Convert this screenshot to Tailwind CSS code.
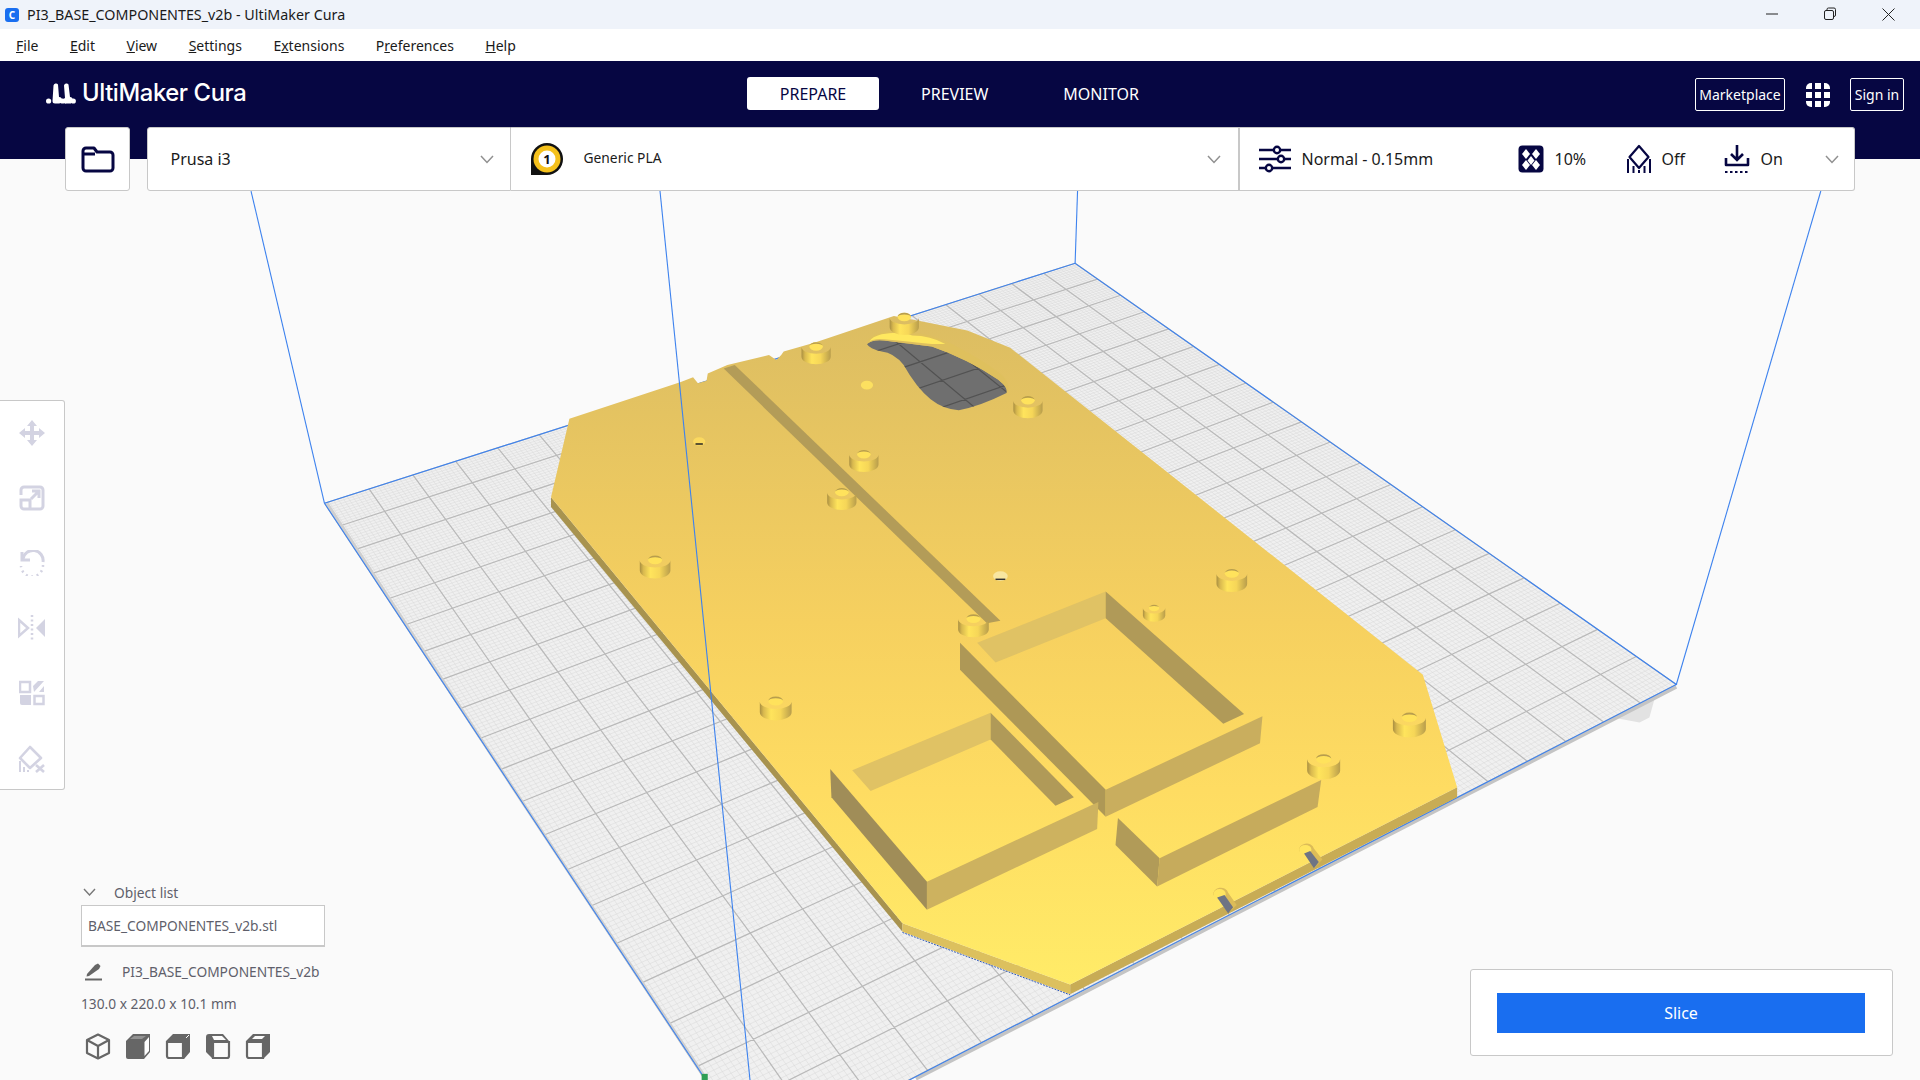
<!DOCTYPE html>
<html>
<head>
<meta charset="utf-8">
<script src="https://cdn.jsdelivr.net/npm/@tailwindcss/browser@4"></script>
</head>
<body class="m-0">
<div class="relative w-[1920px] h-[1080px] overflow-hidden bg-[#fafafa] flex flex-col font-['Noto_Sans',sans-serif]">

  <!-- 3D viewport -->
  <svg class="absolute left-0 top-0 w-[1920px] h-[1080px]" viewBox="0 0 1568 882">
    <defs>
      <linearGradient id="top" gradientUnits="userSpaceOnUse" x1="0" y1="260" x2="0" y2="810">
        <stop offset="0" stop-color="#dcbd62"/><stop offset="0.45" stop-color="#f6d05f"/><stop offset="0.7" stop-color="#fedc62"/><stop offset="1" stop-color="#ffec68"/>
      </linearGradient>
      <linearGradient id="cyl">
        <stop offset="0" stop-color="#a98f42"/><stop offset="0.12" stop-color="#d9b94f"/><stop offset="0.35" stop-color="#ffe45c"/><stop offset="0.65" stop-color="#f6d658"/><stop offset="1" stop-color="#b89d4c"/>
      </linearGradient>
      <symbol id="stud" viewBox="0 0 26 22" overflow="visible">
        <path d="M0.5 6.500A12.500 6 0 0 0 25.500 6.500V15A12.500 6.500 0 0 1 0.500 15Z" fill="url(#cyl)"/>
        <ellipse cx="13" cy="6.200" rx="5.800" ry="3.600" fill="#ffe25c"/>
        <path d="M7.200 6.200A5.800 3.600 0 0 1 18.800 6.200A5.800 2.200 0 0 0 7.200 6.200Z" fill="#b89d4e"/>
      </symbol>
      <clipPath id="holeclip"><path d="M708 281Q712 277 722 278Q745 281 761 283Q790 293 815 310Q824 317 822 321Q800 332 783 335Q770 334 760 326Q748 316 738 298Q730 288 720 287Q710 285 708 281Z"/></clipPath>
    </defs>

    <!-- shadow under plate -->
    <polygon points="1317,586 1339,590 1347,586 1352,568" fill="#e2e2e2"/>

    <!-- build plate -->
    <polygon points="878,215 1369,559 618,946 265,411" fill="#f0f0f0"/>
    <path id="minor" fill="none" stroke="#d8d8d8" stroke-width="0.4"/>
    <path id="major" fill="none" stroke="#b9b9b9" stroke-width="1"/>
    <polyline points="1369,561 1200,648 1000,751 873,817 748,881" fill="none" stroke="#c4c4c4" stroke-width="3"/>
    <polyline points="267,411 420,645 576,880" fill="none" stroke="#cfcfcf" stroke-width="2.500"/>

    <!-- build volume, behind -->
    <g fill="none" stroke="#3d82ee" stroke-width="0.9">
      <path d="M265 411L878 215L1369 559L700 904"/>
      <path d="M265 411L575 880"/>
      <path d="M205 156L265 411"/>
      <path d="M880 156L878 215"/>
      <path d="M1487 156L1369 559"/>
    </g>

    <!-- model -->
    <polygon points="450,406 737,754 737,761 450,414" fill="#a8934f"/>
    <polygon points="737,754 874,804 874,812 737,761" fill="#dcc05e"/>
    <polygon points="874,804 1190,643 1190,651 874,812" fill="#c8ac55"/>
    <polygon points="465,342 556,312 566,308 570,313 577,311 578,305 594,298 628,290 634,294 638,290 640,287 665,280 730,258 750,262 790,270 825,284 1162,551 1190,643 874,804 737,754 450,406" fill="url(#top)"/>
    <path d="M737 761.500L874 812.500" fill="none" stroke="#2a55b8" stroke-width="0.8" stroke-dasharray="1.500 1"/>

    <!-- hole -->
    <path d="M708 281Q712 277 722 278Q745 281 761 283Q790 293 815 310Q824 317 822 321Q800 332 783 335Q770 334 760 326Q748 316 738 298Q730 288 720 287Q710 285 708 281Z" fill="#6f6f6f"/>
    <path id="holegrid" clip-path="url(#holeclip)" fill="none" stroke="#525252" stroke-width="1"/>
    <path d="M708 281Q708 275 720 272Q735 268 745 272Q760 273 775 280Q805 295 820 308Q826 316 822 321Q824 317 815 310Q790 293 761 283Q745 281 722 278Q712 277 708 281Z" fill="#dfc05d"/>
    <path d="M710 279Q712 275 720 273Q735 270 745 274Q760 274 772 281L761 281Q745 279 722 277Q714 276 710 279Z" fill="#ffe85f"/>

    <!-- groove -->
    <polygon points="591,301 600,298 817,507 806,509" fill="#b39c58"/>

    <!-- small holes -->
    <g>
      <ellipse cx="708" cy="314.500" rx="5" ry="3.500" fill="#fce060"/>
      <ellipse cx="571" cy="360.500" rx="5" ry="3.500" fill="#fbd95f"/>
      <rect x="568" y="362" width="6" height="1.200" fill="#222"/>
      <ellipse cx="817" cy="470.500" rx="6" ry="4" fill="#f8e6a0"/>
      <rect x="813" y="472.500" width="8" height="1.200" fill="#333"/>
    </g>

    <!-- block A -->
    <polygon points="798,525 903,483 903,505 813,541" fill="#e0c264"/>
    <polygon points="903,483 903,505 999,591 1016,583" fill="#b09a58"/>
    <polygon points="784,525 784,547 903,667 903,645" fill="#ae9856"/>
    <polygon points="903,645 903,667 1029,607 1031,585" fill="#c9ae5e"/>

    <!-- block B -->
    <polygon points="696,629 809,582 809,604 711,646" fill="#e0c264"/>
    <polygon points="809,582 809,604 862,658 877,651" fill="#b09a58"/>
    <polygon points="678,628 679,651 757,743 757,720" fill="#a08d58"/>
    <polygon points="757,720 757,743 896,677 897,655" fill="#cdb25f"/>

    <!-- block C -->
    <polygon points="913,668 911,690 945,724 947,701" fill="#b19b58"/>
    <polygon points="947,701 945,724 1076,659 1079,637" fill="#c6ab5c"/>

    <!-- slots -->
    <path d="M991 731A6 5 0 0 1 1003 729L1010 739L1003 746L997 736Z" fill="#dcbc58"/>
    <ellipse cx="996" cy="730" rx="5" ry="4" fill="#ffe560"/>
    <polygon points="994,733 1000,731 1007,741 1003,746" fill="#6e7484"/>
    <path d="M1061 695A6 5 0 0 1 1073 693L1080 702L1073 709L1067 699Z" fill="#dcbc58"/>
    <ellipse cx="1066" cy="694" rx="5" ry="4" fill="#ffe560"/>
    <polygon points="1065,697 1070,695 1077,704 1073,709" fill="#6e7484"/>

    <!-- studs -->
    <use href="#stud" x="726" y="253" width="25" height="21"/>
    <use href="#stud" x="654" y="277" width="25" height="21"/>
    <use href="#stud" x="827" y="321" width="25" height="21"/>
    <use href="#stud" x="693" y="365" width="25" height="21"/>
    <use href="#stud" x="675" y="396" width="25" height="21"/>
    <use href="#stud" x="522" y="451" width="26" height="22"/>
    <use href="#stud" x="620" y="566" width="27" height="23"/>
    <use href="#stud" x="782" y="499" width="26" height="22"/>
    <use href="#stud" x="993" y="462" width="26" height="22"/>
    <use href="#stud" x="933" y="490" width="19" height="20"/>
    <use href="#stud" x="1137" y="579" width="28" height="24"/>
    <use href="#stud" x="1067" y="613" width="28" height="24"/>

    <!-- blue line over the model -->
    <path d="M539 156L612.500 882" fill="none" stroke="#3d82ee" stroke-width="0.9"/>
    <rect x="573" y="877" width="5" height="5" fill="#2f9e55"/>
  </svg>

  <!-- title bar -->
  <div class="relative h-[29px] bg-[#eff3fa] flex items-center pl-[5px] shrink-0">
    <div class="w-[14px] h-[14px] rounded-[3px] bg-[#196ef0] text-white text-[10px] leading-[14px] font-bold text-center">C</div>
    <span class="ml-[8px] text-[14.3px] text-[#1a1a1a]">PI3_BASE_COMPONENTES_v2b - UltiMaker Cura</span>
    <div class="ml-auto flex items-center">
      <svg class="w-[60px] h-[29px]" viewBox="0 0 60 29"><path d="M24 14H36" stroke="#222" stroke-width="1"/></svg>
      <svg class="w-[58px] h-[29px] -ml-[1px]" viewBox="0 0 58 29" fill="none" stroke="#222" stroke-width="1"><rect x="23.500" y="10.500" width="9" height="9" rx="1.500"/><path d="M26 10V9A1.500 1.500 0 0 1 27.500 8H33A1.500 1.500 0 0 1 34.500 9.500V15A1.500 1.500 0 0 1 33 16.500"/></svg>
      <svg class="w-[61px] h-[29px] -ml-[1px] mr-[1px]" viewBox="0 0 61 29"><path d="M24.500 8.500L36.500 20.500M36.500 8.500L24.500 20.500" stroke="#222" stroke-width="1"/></svg>
    </div>
  </div>

  <!-- menu bar -->
  <div class="relative h-[32px] bg-white flex items-center pl-[16px] gap-[31.5px] text-[14px] text-[#1a1a1a] shrink-0">
    <span><span class="underline">F</span>ile</span>
    <span><span class="underline">E</span>dit</span>
    <span><span class="underline">V</span>iew</span>
    <span><span class="underline">S</span>ettings</span>
    <span>E<span class="underline">x</span>tensions</span>
    <span>P<span class="underline">r</span>eferences</span>
    <span><span class="underline">H</span>elp</span>
  </div>

  <!-- header -->
  <div class="relative h-[98px] bg-[#060642] shrink-0">
    <div class="absolute left-[46px] top-[16px] flex items-center gap-[6px] h-[32px]">
      <svg class="w-[30px] h-[21px]" viewBox="0 0 30 21" fill="#fff">
        <circle cx="2.600" cy="18" r="2.600"/>
        <path d="M7.500 2.500A2.500 2.500 0 0 1 12 1.500L13 14A3 3 0 0 1 12.500 20.500H9A2.500 2.500 0 0 1 6.500 18Z"/>
        <circle cx="16.500" cy="18" r="2.600"/>
        <path d="M18 2.500A2.500 2.500 0 0 1 22.500 1.500L24 14A3 3 0 0 1 23 20.500H20.500A2.500 2.500 0 0 1 19 15Z"/>
        <circle cx="27.300" cy="18" r="2.600"/>
      </svg>
      <span class="font-['Inter',sans-serif] text-[23.8px] font-medium leading-none tracking-[-0.4px] text-white">UltiMaker Cura</span>
    </div>
    <div class="absolute left-[747px] top-[16px] flex items-center text-[16px]">
      <div class="w-[132px] h-[33px] rounded-[3px] bg-white text-[#060642] flex items-center justify-center">PREPARE</div>
      <div class="ml-[42px] text-white">PREVIEW</div>
      <div class="ml-[75px] text-white">MONITOR</div>
    </div>
    <div class="absolute left-[1695px] top-[17px] flex items-center">
      <div class="w-[90px] h-[33px] rounded-[2px] border border-white text-white text-[14px] flex items-center justify-center">Marketplace</div>
      <svg class="ml-[20px] w-[26px] h-[26px]" viewBox="0 0 26 26" fill="#fff">
        <path d="M1 6A5 5 0 0 1 6 1H7V7H1Z"/><rect x="10" y="1" width="6" height="6"/><path d="M19 1H20A5 5 0 0 1 25 6V7H19Z"/>
        <rect x="1" y="10" width="6" height="6"/><rect x="10" y="10" width="6" height="6"/><rect x="19" y="10" width="6" height="6"/>
        <path d="M1 19H7V25H6A5 5 0 0 1 1 20Z"/><rect x="10" y="19" width="6" height="6"/><path d="M19 19H25V20A5 5 0 0 1 20 25H19Z"/>
      </svg>
      <div class="ml-[19px] w-[54px] h-[33px] rounded-[2px] border border-white text-white text-[14px] flex items-center justify-center">Sign in</div>
    </div>
  </div>

  <!-- top toolbar -->
  <div class="absolute left-[65px] top-[127px] flex items-stretch h-[64px]">
    <div class="w-[65px] bg-white rounded-[3px] border border-[#c8c8c8] flex items-center justify-center">
      <svg class="w-[34px] h-[27px]" viewBox="0 0 34 27" fill="none" stroke="#060642" stroke-width="3" stroke-linejoin="round"><path d="M2 5A3 3 0 0 1 5 2H13L16 6H29A3 3 0 0 1 32 9V22A3 3 0 0 1 29 25H5A3 3 0 0 1 2 22Z"/><path d="M2 8H14"/></svg>
    </div>
    <div class="ml-[16.5px] w-[364px] bg-white rounded-l-[3px] border border-[#c8c8c8] flex items-center pl-[23px] pr-[16px]">
      <span class="text-[16px] text-[#1a1a1a]">Prusa i3</span>
      <svg class="ml-auto w-[14px] h-[9px]" viewBox="0 0 14 9" fill="none" stroke="#909090" stroke-width="1.500"><path d="M1 1L7 7.500L13 1"/></svg>
    </div>
    <div class="w-[727px] bg-white border-y border-[#c8c8c8] flex items-center pl-[18px] pr-[17px]">
      <svg class="w-[36px] h-[36px]" viewBox="0 0 36 36"><path d="M2 34V18A16 16 0 1 1 18 34Z" fill="#111"/><circle cx="18" cy="18" r="13.500" fill="#f5c11c"/><circle cx="18" cy="18" r="8.500" fill="#fff"/><text x="18" y="22.500" font-size="13" font-weight="700" text-anchor="middle" font-family="Noto Sans" fill="#111">1</text></svg>
      <span class="ml-[19px] -mt-[1px] text-[13.8px] text-[#1a1a1a]">Generic PLA</span>
      <svg class="ml-auto w-[14px] h-[9px]" viewBox="0 0 14 9" fill="none" stroke="#909090" stroke-width="1.500"><path d="M1 1L7 7.500L13 1"/></svg>
    </div>
    <div class="w-[617px] bg-white rounded-r-[3px] border border-[#c8c8c8] border-l-2 relative flex items-center text-[16px] text-[#1a1a1a]">
      <svg class="absolute left-[18px] w-[34px] h-[30px]" viewBox="0 0 34 30" fill="none" stroke="#060642" stroke-width="2.400"><path d="M1 6H15M23 6H33M1 15H19M27 15H33M1 24H7M15 24H33"/><circle cx="19" cy="6" r="3.200"/><circle cx="23" cy="15" r="3.200"/><circle cx="11" cy="24" r="3.200"/></svg>
      <span class="absolute left-[62px]">Normal - 0.15mm</span>
      <svg class="absolute left-[278px] w-[26px] h-[28px]" viewBox="0 0 26 28"><rect x="0.500" y="0.500" width="25" height="27" rx="4" fill="#060642"/><g fill="#fff"><path d="M8 4L12 9L8 14L4 9Z"/><path d="M18 4L22 9L18 14L14 9Z"/><path d="M13 11L16.500 15.500L13 20L9.500 15.500Z"/><path d="M8 15L12 20L8 25L4 20Z"/><path d="M18 15L22 20L18 25L14 20Z"/></g></svg>
      <span class="absolute left-[315px]">10%</span>
      <svg class="absolute left-[386px] w-[26px] h-[30px]" viewBox="0 0 26 30" fill="none" stroke="#060642" stroke-width="2.200"><path d="M13 2L22.500 13L13 24L3.500 13Z" stroke-linejoin="round"/><path d="M2 15V29M24 15V29M7.500 22V29M18.500 22V29" stroke-width="2"/><path d="M13 26V29" stroke-width="2"/></svg>
      <span class="absolute left-[422px]">Off</span>
      <svg class="absolute left-[484px] w-[26px] h-[30px]" viewBox="0 0 26 30" fill="none" stroke="#060642" stroke-width="2.600"><path d="M13 1V15M7 10L13 16L19 10"/><path d="M2 14V21H24V14" stroke-linejoin="round"/><path d="M1 28H25" stroke-width="2" stroke-dasharray="2.500 2.500"/></svg>
      <span class="absolute left-[521px]">On</span>
      <svg class="absolute left-[585px] w-[14px] h-[9px]" viewBox="0 0 14 9" fill="none" stroke="#909090" stroke-width="1.500"><path d="M1 1L7 7.500L13 1"/></svg>
    </div>
  </div>

  <!-- left tools -->
  <div class="absolute left-0 top-[400px] w-[65px] h-[390px] bg-white rounded-r-[3px] border border-l-0 border-[#c8c8c8] flex flex-col items-center gap-[39px] pt-[19px] pr-[1px]">
    <svg class="w-[26px] h-[26px]" viewBox="0 0 26 26" fill="#d3d3e2"><path d="M13 0L18 6H15V11H20V8L26 13L20 18V15H15V20H18L13 26L8 20H11V15H6V18L0 13L6 8V11H11V6H8Z"/></svg>
    <svg class="w-[26px] h-[26px]" viewBox="0 0 26 26" fill="none" stroke="#d3d3e2" stroke-width="3"><path d="M2 10V5A3 3 0 0 1 5 2H21A3 3 0 0 1 24 5V21A3 3 0 0 1 21 24H5A3 3 0 0 1 2 21V15H11V24"/><path d="M12 14L20 6M13 6H20V13"/></svg>
    <svg class="w-[26px] h-[26px]" viewBox="0 0 26 26" fill="none" stroke="#d3d3e2" stroke-width="3"><path d="M3 2V10H11"/><path d="M4 9A10 10 0 0 1 24 12"/><path d="M24 15A11 11 0 0 1 2 16" stroke-dasharray="2 3.500" stroke-width="2.500"/></svg>
    <svg class="w-[28px] h-[26px]" viewBox="0 0 28 26" fill="#d3d3e2"><path d="M1 5L10 13L1 21Z" fill="none" stroke="#d3d3e2" stroke-width="2.500"/><path d="M27 4L18 13L27 22Z"/><path d="M14 0V26" stroke="#d3d3e2" stroke-width="2.500" stroke-dasharray="2 2.500"/></svg>
    <svg class="w-[26px] h-[26px]" viewBox="0 0 26 26" fill="#d3d3e2"><path d="M1 2H11V12H1Z" fill="none" stroke="#d3d3e2" stroke-width="2.500"/><path d="M15 12L25 1H19L14 6ZM25 6L20 12H25Z"/><path d="M1 15H12V25H3A2 2 0 0 1 1 23Z"/><path d="M15.500 16H24.500V24H15.500Z" fill="none" stroke="#d3d3e2" stroke-width="2.500"/></svg>
    <svg class="w-[28px] h-[28px]" viewBox="0 0 28 28" fill="none" stroke="#d3d3e2" stroke-width="2.600"><path d="M12 2L23 13L12 23L2 13Z" stroke-linejoin="round"/><path d="M2 16V27M6 22V27M10 25V27" stroke-width="2"/><path d="M18 20L26 27M26 20L18 27"/></svg>
  </div>

  <!-- object list -->
  <div class="absolute left-[81px] top-[881px] w-[260px] text-[#5f5f6b]">
    <div class="flex items-center h-[24px]">
      <svg class="ml-[2px] w-[13px] h-[8px] -mt-[3px]" viewBox="0 0 13 8" fill="none" stroke="#777" stroke-width="1.400"><path d="M1 1L6.500 7L12 1"/></svg>
      <span class="ml-[18px] text-[13.75px]">Object list</span>
    </div>
    <div class="w-[244px] h-[42px] bg-white border border-[#c8c8c8] border-b-2 flex items-center pl-[6px] pt-[1px] text-[13.75px]">BASE_COMPONENTES_v2b.stl</div>
    <div class="flex items-center h-[24px] mt-[13px]">
      <svg class="ml-[3px] w-[19px] h-[18px]" viewBox="0 0 19 18" fill="#666"><path d="M11 2L14 0.500L16.500 3L15 6L5 13L2.500 13.500L3 11Z"/><rect x="1" y="15.500" width="17" height="2"/></svg>
      <span class="ml-[19px] text-[13.75px]">PI3_BASE_COMPONENTES_v2b</span>
    </div>
    <div class="mt-[10px] text-[13.75px]">130.0 x 220.0 x 10.1 mm</div>
    <div class="flex items-center gap-[14px] mt-[18px] ml-[4px]">
      <svg class="w-[26px] h-[27px]" viewBox="0 0 26 27" fill="none" stroke="#666" stroke-width="2.200" stroke-linejoin="round"><path d="M13 1.500L24 7V20L13 25.500L2 20V7Z"/><path d="M2 7L13 13L24 7M13 13V25.500"/></svg>
      <svg class="w-[26px] h-[27px]" viewBox="0 0 26 27" fill="#666"><path d="M1 8L8 1H25V19L19 26H3A2 2 0 0 1 1 24Z"/><path d="M19.500 9L24 4V18L19.500 23Z" fill="#fff"/><path d="M5 6L9 3H21L17 6Z" fill="#fafafa" opacity="0.300"/></svg>
      <svg class="w-[26px] h-[27px]" viewBox="0 0 26 27"><path d="M8 1H25V19L19 26V8H1Z" fill="#666"/><path d="M2 9H18V25H4A2 2 0 0 1 2 23Z" fill="none" stroke="#666" stroke-width="2.200"/><path d="M21 5L24 2" stroke="#fff"/></svg>
      <svg class="w-[26px] h-[27px]" viewBox="0 0 26 27"><path d="M1 4A3 3 0 0 1 4 1H18L24 8H8V26L1 19Z" fill="#666"/><path d="M8 9H24V23A2 2 0 0 1 22 25H8Z" fill="none" stroke="#666" stroke-width="2.200"/><path d="M7 3H17L21 7H9Z" fill="#fafafa"/></svg>
      <svg class="w-[26px] h-[27px]" viewBox="0 0 26 27"><path d="M8 1H25V19L18 26V8H1Z" fill="#666"/><path d="M2 9H18V25H4A2 2 0 0 1 2 23Z" fill="none" stroke="#666" stroke-width="2.200"/><path d="M7 6L10 3H20L17 6Z" fill="#fafafa"/></svg>
    </div>
  </div>

  <!-- slice panel -->
  <div class="absolute left-[1470px] top-[969px] w-[423px] h-[87px] bg-white rounded-[3px] border border-[#c8c8c8] flex items-center justify-center">
    <div class="w-[368px] h-[40px] bg-[#196ef0] text-white text-[16px] flex items-center justify-center -ml-[1px]">Slice</div>
  </div>
</div>

<script>
  var B=[878,215],R=[1369,559],F=[618,946],L=[265,411];
  function homo(){
    var dx1=R[0]-F[0],dx2=L[0]-F[0],sx=B[0]-R[0]+F[0]-L[0];
    var dy1=R[1]-F[1],dy2=L[1]-F[1],sy=B[1]-R[1]+F[1]-L[1];
    var d=dx1*dy2-dx2*dy1;
    var g=(sx*dy2-dx2*sy)/d,h=(dx1*sy-sx*dy1)/d;
    return [R[0]-B[0]+g*R[0],L[0]-B[0]+h*L[0],B[0],R[1]-B[1]+g*R[1],L[1]-B[1]+h*L[1],B[1],g,h];
  }
  var H=homo();
  function P(u,v){var w=H[6]*u+H[7]*v+1;return ((H[0]*u+H[1]*v+H[2])/w).toFixed(1)+' '+((H[3]*u+H[4]*v+H[5])/w).toFixed(1);}
  var maj='',min='';
  for(var i=0;i<=200;i++){
    var t=i/200,seg='M'+P(t,0)+'L'+P(t,1)+'M'+P(0,t)+'L'+P(1,t);
    if(i%10==0)maj+=seg;else min+=seg;
  }
  document.getElementById('major').setAttribute('d',maj);
  document.getElementById('minor').setAttribute('d',min);
  document.getElementById('holegrid').setAttribute('d',maj);
</script>
</body>
</html>
